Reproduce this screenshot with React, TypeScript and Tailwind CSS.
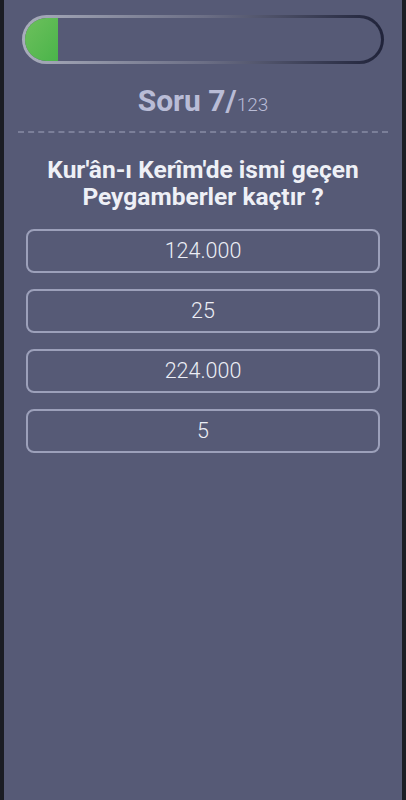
import React from 'react';

const answers = ['124.000', '25', '224.000', '5'];

export default function App() {
  const current = 7;
  const total = 123;

  return (
    <div className="flex h-[800px] w-full bg-[#1b1d24] px-[4px]" style={{ fontFamily: 'Roboto, "Liberation Sans", sans-serif' }}>
      <div className="flex flex-1 flex-col bg-[#565a76]">
        {/* progress bar */}
        <div className="mx-[18px] mt-[15px] h-[49px] rounded-full bg-gradient-to-r from-[#a9adbc] via-[#6c6f86] to-[#20233a] p-[3px]">
          <div className="flex h-full overflow-hidden rounded-full bg-[#565a76]">
            <div className="h-full w-[33px] bg-gradient-to-br from-[#6cc05c] to-[#4ab44a]" />
          </div>
        </div>

        <div className="mt-[22px] text-center leading-none text-[#b9bcd6]">
          <span className="text-[30px] font-bold">Soru {current}/</span>
          <span className="text-[19px] font-light">{total}</span>
        </div>

        <div className="mx-[14px] mt-[15px] border-t-2 border-dashed border-[#7b7f99]" />

        <h1 className="mt-[23px] px-2 text-center text-[24.5px] font-bold leading-[27px] text-[#eef0f6]">
          Kur'ân-ı Kerîm'de ismi geçen
          <br />
          Peygamberler kaçtır ?
        </h1>

        <div className="mt-[19px] flex flex-col gap-[16px] px-[22px]">
          {answers.map((a) => (
            <button
              key={a}
              className="flex h-[44px] items-center justify-center rounded-[8px] border-2 border-[#9ca0ba] text-[21.5px] font-light text-[#eceef5]"
            >
              {a}
            </button>
          ))}
        </div>
      </div>
    </div>
  );
}
